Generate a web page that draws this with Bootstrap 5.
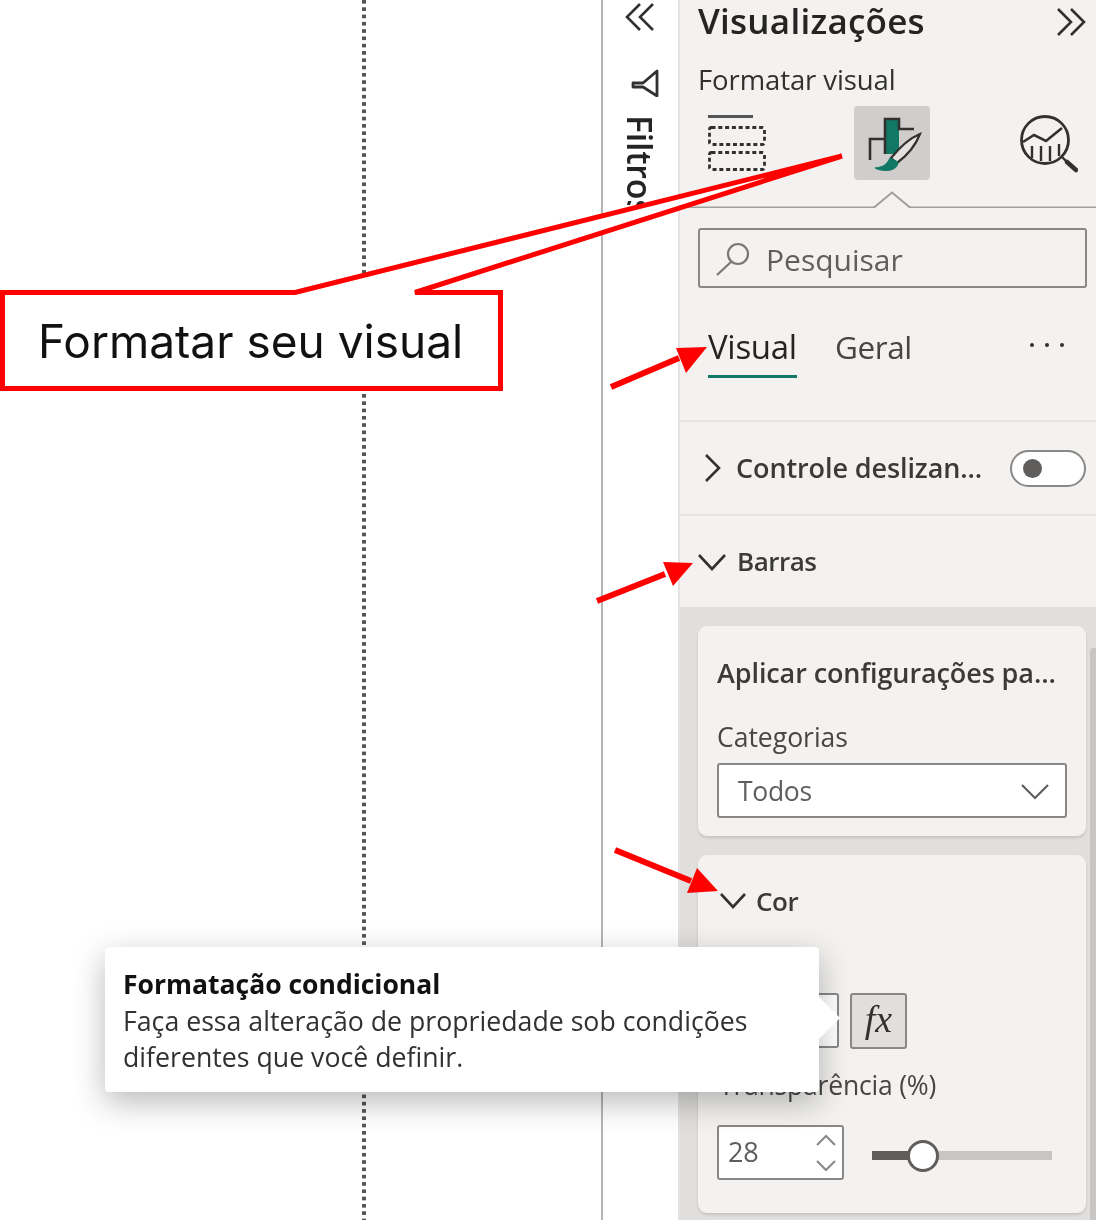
<!DOCTYPE html>
<html lang="pt-BR">
<head>
<meta charset="utf-8">
<title>Formatar visual</title>
<link href="https://cdn.jsdelivr.net/npm/bootstrap@5.3.0/dist/css/bootstrap.min.css" rel="stylesheet">
<style>
html,body{margin:0;background:#fff}
body{font-family:"Open Sans","Noto Sans",sans-serif;color:#323130}
.stage{width:1096px;height:1220px;overflow:hidden;filter:blur(.35px)}
.canvas-pane{width:601px;height:1220px;background:#fff}
.dot-line{width:4px;height:1220px;margin-left:362px;background:linear-gradient(#555 0 4px,transparent 4px 7.3px) 0 0/4px 7.3px}
.filter-strip{width:77px;height:1220px;border-left:2px solid #b5b5b5;padding-top:3px}
.filter-back{margin-left:22px;height:28px}
.filter-horn{margin:38px 0 0 28px}
.filter-label{margin:18px 0 0 20px;height:90px;overflow:hidden;writing-mode:vertical-rl;font-size:34px;font-weight:600;line-height:34px;color:#252423;letter-spacing:-.3px}
.pane{width:418px;height:1220px;background:#f3f2f1;border-left:2px solid #e3e2e1}
.pane-head{height:44px;padding:0 10px 0 18px}
.pane-title{font-size:35px;font-weight:600;line-height:42px;color:#252423;letter-spacing:.25px}
.sub-title{height:54px;padding:18px 0 0 18px;font-size:27.500px;font-weight:500;line-height:36px;color:#323130;letter-spacing:-.1px}
.icon-row{height:74px;margin-top:8px;padding-left:28px}
.tool-tile{width:76px;height:74px;margin-left:88px;background:#cfcecd;border-radius:4px}
.tool-c{margin-left:90px}
.beak-row{height:28px;display:block}
.search-box{height:60px;margin:20px 9px 0 18px;background:#f3f2f1;border:2px solid #8a8886;border-radius:3px;padding:2px 0 0 15px;gap:15px;font-size:30px;color:#605e5c}
.tab-row{padding:39px 20px 0 28px;border-bottom:2px solid #e6e4e3;height:134px}
.tab-on{font-size:33px;line-height:40px;height:59px;color:#252423;font-weight:500;letter-spacing:-.3px;width:89px;white-space:nowrap}
.tab-on::after{content:"";display:block;height:3px;background:#117865;margin-top:8px}
.tab-off{font-size:31.500px;line-height:40px;color:#484644;margin-left:38px;letter-spacing:-.4px}
.tab-more{margin-left:auto;margin-top:15px;margin-right:11px}
.sect-row{height:94px;border-bottom:2px solid #e6e4e3;padding:0 10px 0 24px}
.sect-name{font-size:27px;font-weight:600;color:#3b3a39;margin-left:15px;letter-spacing:-.1px;white-space:nowrap}
.sect-short{font-size:26px;letter-spacing:-.5px;font-weight:600;color:#3b3a39;margin-left:11px}
.pill{width:76px;height:37px;margin-left:auto;background:#fff;border:2px solid #8a8886;border-radius:19px;padding-left:11px}
.pill-dot{width:19px;height:19px;background:#605e5c;border-radius:50%}
.sect-open{height:91px;padding-left:18px}
.well{height:613px;background:#e0dfde;padding:19px 10px 0 18px}
.panel-box{background:#f3f2f1;border:0;border-radius:9px;box-shadow:0 2px 3px rgba(0,0,0,.12);padding-left:19px}
.box-a{height:210px;padding-top:30px}
.box-b{height:358px;margin-top:19px;padding-top:29px}
.box-title{font-size:27px;font-weight:600;line-height:34px;color:#3b3a39;letter-spacing:-.1px;white-space:nowrap}
.field-name{font-size:26.500px;line-height:36px;color:#484644;margin-top:29px}
.pick{width:350px;height:55px;margin-top:8px;background:#fff;border:2px solid #8a8886;border-radius:3px;padding:2px 16px 0 19px;font-size:26.500px;color:#605e5c;letter-spacing:-.3px}
.chev-cor{margin-left:3px}
.cor-name{margin-left:10px;font-size:26px;letter-spacing:-.4px}
.fx-row{height:56px;margin-top:75px;gap:11px}
.fx-swatch{width:122px;height:55px;background:#fff;border:2px solid #8a8886;border-radius:3px}
.fx-btn{width:57px;height:56px;padding-bottom:4px;background:#e1dfdd;border:2px solid #8a8886;border-radius:3px;font-family:"Liberation Serif",serif;font-style:italic;font-size:38px;line-height:46px;color:#323130}
.trans-name{margin-top:18px;margin-left:2px;white-space:nowrap;font-size:26.500px;line-height:36px;color:#484644;letter-spacing:-.2px}
.step-row{margin-top:22px}
.stepper{width:127px;height:55px;background:#fff;border:2px solid #8a8886;border-radius:3px;padding:0 6px 0 9px;font-size:27px;color:#605e5c;letter-spacing:-.3px}
.slide{width:180px;height:9px;margin:6px 0 0 28px;background:#c8c6c4;position:relative}
.slide-fill{height:9px;background:#605e5c}
.slide-knob{position:absolute;left:35px;top:-11px;width:32px;height:32px;border-radius:50%;background:#fff;border:3px solid #605e5c}
.scroll-rail{position:absolute;left:1090px;top:648px;width:6px;height:572px;background:#c8c6c4;border-radius:3px 0 0 0}
.ink{position:absolute;left:0;top:0;pointer-events:none}
.callout-text{position:absolute;left:38px;top:310px;font-family:"Inter","Open Sans",sans-serif;font-size:46px;line-height:62px;color:#111;white-space:nowrap}
.tip-box{position:absolute;left:105px;top:947px;width:714px;height:145px;background:#fff;border-radius:4px;box-shadow:0 10px 32px rgba(0,0,0,.28);padding:19px 18px}
.tip-beak{position:absolute;left:712px;top:48px}
.tip-head{font-size:26.500px;font-weight:700;line-height:37px;color:#111;white-space:nowrap}
.tip-body{font-size:26.700px;line-height:36px;color:#323130;white-space:nowrap}
</style>
</head>
<body>
<div class="stage position-relative d-flex">
  <div class="canvas-pane flex-shrink-0"><div class="dot-line"></div></div>

  <div class="filter-strip flex-shrink-0">
    <svg class="filter-back d-block" width="30" height="28" viewBox="0 0 30 28" fill="none" stroke="#323130" stroke-width="2.600"><path d="M15 1 2 14l13 13M28 1 15 14l13 13"/></svg>
    <svg class="filter-horn d-block" width="28" height="28" viewBox="0 0 28 28" fill="none" stroke="#323130" stroke-width="2.800" stroke-linejoin="round"><path d="M26 2v25L12 18H2v-4H12z"/></svg>
    <div class="filter-label">Filtros</div>
  </div>

  <div class="pane flex-shrink-0">
    <div class="pane-head d-flex align-items-start justify-content-between">
      <div class="pane-title">Visualizações</div>
      <svg class="align-self-center" width="30" height="28" viewBox="0 0 30 28" fill="none" stroke="#323130" stroke-width="2.600"><path d="M2 1l13 13L2 27M15 1l13 13-13 13"/></svg>
    </div>
    <div class="sub-title">Formatar visual</div>
    <div class="icon-row d-flex">
      <svg class="flex-shrink-0" width="58" height="74" viewBox="0 0 58 74" fill="none" stroke="#323130"><path d="M0 10.500h45" stroke="#555" stroke-width="3"/><rect x="1.500" y="21.500" width="55" height="17" rx="2" stroke-width="2.800" stroke-dasharray="4 2.800"/><rect x="1.500" y="46.500" width="55" height="17" rx="2" stroke-width="2.800" stroke-dasharray="4 2.800"/></svg>
      <div class="tool-tile flex-shrink-0 d-flex align-items-center justify-content-center">
        <svg width="76" height="74" viewBox="854 106 76 74" fill="none">
          <rect x="886" y="120" width="13" height="34" fill="#117865"/>
          <path d="M870 160v-21h15M885 154v-35h14v10h15" stroke="#323130" stroke-width="2.600"/>
          <path d="M920 134c-10 4-20 13-29 24l6 5c8-6 18-16 23-29z" fill="#e3e2e1" stroke="#323130" stroke-width="2.200"/>
          <path d="M890 158c-4 8-8 9-15 10 7 4 23 4 23-6z" fill="#117865" stroke="#117865"/>
        </svg>
      </div>
      <svg class="tool-c flex-shrink-0" width="58" height="74" viewBox="1020 106 58 74" fill="none" stroke="#323130">
        <circle cx="1045" cy="140" r="23.500" stroke-width="2.800"/>
        <path d="M1023 142l11-7 12 6 16-13" stroke-width="2.600"/>
        <path d="M1032 146v12M1041 146v15M1050 146v15M1059 144v12" stroke-width="2.400"/>
        <path d="M1061 156l7 7" stroke-width="2.400"/><path d="M1067 162l9 8" stroke-width="4.500" stroke-linecap="round"/>
      </svg>
    </div>
    <svg class="beak-row" width="416" height="28" viewBox="680 180 416 28" fill="none"><path d="M680 207.500h194l18-15 18 15h186" stroke="#a19f9d" stroke-width="2"/></svg>
    <div class="search-box d-flex align-items-center">
      <svg width="36" height="36" viewBox="0 0 36 36" fill="none" stroke="#797775" stroke-width="2.200"><circle cx="23" cy="13" r="10"/><path d="M16 21 2 34"/></svg>
      <span>Pesquisar</span>
    </div>
    <div class="tab-row d-flex align-items-start">
      <div class="tab-on">Visual</div>
      <div class="tab-off">Geral</div>
      <svg class="tab-more" width="36" height="6" viewBox="0 0 36 6" fill="#323130"><circle cx="3" cy="3" r="2"/><circle cx="18" cy="3" r="2"/><circle cx="33" cy="3" r="2"/></svg>
    </div>
    <div class="sect-row d-flex align-items-center">
      <svg width="17" height="30" viewBox="0 0 17 30" fill="none" stroke="#323130" stroke-width="2.600"><path d="M2 2l13 13L2 28"/></svg>
      <div class="sect-name">Controle deslizan...</div>
      <div class="pill d-flex align-items-center"><div class="pill-dot"></div></div>
    </div>
    <div class="sect-open d-flex align-items-center">
      <svg width="28" height="18" viewBox="0 0 28 18" fill="none" stroke="#323130" stroke-width="2.600"><path d="M1 2l13 14L27 2"/></svg>
      <div class="sect-short">Barras</div>
    </div>
    <div class="well">
      <div class="card panel-box box-a">
        <div class="box-title">Aplicar configurações pa...</div>
        <div class="field-name">Categorias</div>
        <div class="pick d-flex align-items-center justify-content-between">
          <span>Todos</span>
          <svg width="28" height="16" viewBox="0 0 28 16" fill="none" stroke="#605e5c" stroke-width="2.200"><path d="M1 1l13 13L27 1"/></svg>
        </div>
      </div>
      <div class="card panel-box box-b">
        <div class="d-flex align-items-center">
          <svg class="chev-cor" width="26" height="18" viewBox="0 0 26 18" fill="none" stroke="#323130" stroke-width="2.600"><path d="M1 2l12 13L25 2"/></svg>
          <div class="box-title cor-name">Cor</div>
        </div>
        <div class="fx-row d-flex">
          <div class="fx-swatch"></div>
          <div class="fx-btn d-flex align-items-center justify-content-center">fx</div>
        </div>
        <div class="trans-name">Transparência (%)</div>
        <div class="step-row d-flex align-items-center">
          <div class="stepper d-flex align-items-center justify-content-between">
            <span>28</span>
            <svg width="20" height="40" viewBox="0 0 20 40" fill="none" stroke="#8a8886" stroke-width="2"><path d="M1 12l9-9 9 9M1 28l9 9 9-9"/></svg>
          </div>
          <div class="slide"><div class="slide-fill w-25"></div><div class="slide-knob"></div></div>
        </div>
      </div>
    </div>
  </div>

  <div class="scroll-rail"></div>

  <svg class="ink" width="1096" height="1220" viewBox="0 0 1096 1220" fill="none">
    <path d="M2.500 292.500H295L842 156 415 292.500H500.500V388.500H2.500Z" fill="#fff" stroke="#f00" stroke-width="5"/>
    <path d="M611 387l68-29" stroke="#f00" stroke-width="6"/><path d="M707 347l-31 1 10 25z" fill="#f00"/>
    <path d="M597 601l68-27" stroke="#f00" stroke-width="6"/><path d="M693 563l-30-1 10 24z" fill="#f00"/>
    <path d="M615 850l76 31" stroke="#f00" stroke-width="6"/><path d="M718 891l-21-23-10 25z" fill="#f00"/>
  </svg>
  <div class="callout-text">Formatar seu visual</div>

  <div class="tip-box">
    <svg class="tip-beak" width="24" height="46" viewBox="0 0 24 46"><path d="M0 0l23 23L0 46z" fill="#fff"/></svg>
    <div class="tip-head">Formatação condicional</div>
    <div class="tip-body">Faça essa alteração de propriedade sob condições</div>
    <div class="tip-body">diferentes que você definir.</div>
  </div>
</div>
</body>
</html>
